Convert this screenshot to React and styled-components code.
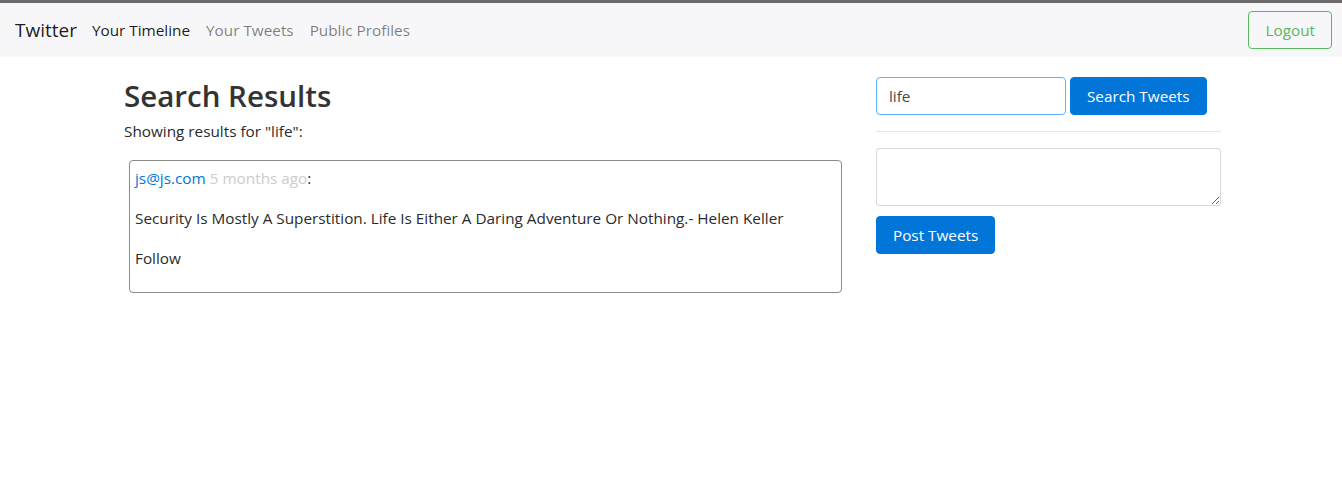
import React from "react";
import styled, { createGlobalStyle } from "styled-components";

const GlobalStyle = createGlobalStyle`
  * { box-sizing: border-box; }
  body {
    margin: 0;
    font-family: "Open Sans", "Noto Sans", sans-serif;
    font-size: 15.3px;
    line-height: 24px;
    color: #292b2c;
    background: #fff;
  }
`;

export default function App() {
  return (
    <>
      <GlobalStyle />
      <Navbar>
        <Brand>Twitter</Brand>
        <NavLink $active>Your Timeline</NavLink>
        <NavLink>Your Tweets</NavLink>
        <NavLink>Public Profiles</NavLink>
        <LogoutButton>Logout</LogoutButton>
      </Navbar>
      <Container>
        <MainColumn>
          <Title>Search Results</Title>
          <Subtitle>Showing results for "life":</Subtitle>
          <TweetCard>
            <TweetLine>
              <UserLink>js@js.com</UserLink> <TimeAgo>5 months ago</TimeAgo>:
            </TweetLine>
            <TweetLine>
              Security Is Mostly A Superstition. Life Is Either A Daring Adventure Or Nothing.- Helen Keller
            </TweetLine>
            <TweetLine>Follow</TweetLine>
          </TweetCard>
        </MainColumn>
        <SideColumn>
          <SearchRow>
            <SearchInput defaultValue="life" />
            <PrimaryButton>Search Tweets</PrimaryButton>
          </SearchRow>
          <Divider />
          <TweetBox />
          <PrimaryButton>Post Tweets</PrimaryButton>
        </SideColumn>
      </Container>
    </>
  );
}

const Navbar = styled.nav`
  display: flex;
  align-items: center;
  height: 57px;
  padding: 0 10px 0 15px;
  background: #f7f7f9;
  border-top: 3px solid #6b6b6b;
`;

const Brand = styled.span`
  font-size: 19px;
  color: rgba(0, 0, 0, 0.9);
  margin-right: 7px;
`;

const NavLink = styled.span`
  padding: 0 8px;
  color: ${(p) => (p.$active ? "rgba(0,0,0,0.9)" : "rgba(0,0,0,0.5)")};
`;

const LogoutButton = styled.button`
  margin-left: auto;
  height: 38px;
  padding: 0 16px;
  font: inherit;
  color: #5cb85c;
  background: transparent;
  border: 1px solid #5cb85c;
  border-radius: 4px;
`;

const Container = styled.div`
  display: flex;
  width: 1100px;
  margin: 0 auto;
  padding-top: 20px;
`;

const MainColumn = styled.div`
  width: 757px;
  padding-left: 3px;
`;

const Title = styled.h2`
  margin: 0;
  font-size: 29.5px;
  font-weight: 600;
  line-height: 38px;
  color: #333;
`;

const Subtitle = styled.p`
  margin: 4px 0 17px;
`;

const TweetCard = styled.div`
  margin-left: 5px;
  width: 713px;
  padding: 5px 5px 6px;
  border: 1px solid #8a8a8a;
  border-radius: 4px;
`;

const TweetLine = styled.p`
  margin: 0 0 16px;
`;

const UserLink = styled.a`
  color: #0275d8;
  text-decoration: none;
`;

const TimeAgo = styled.span`
  color: #cccccc;
`;

const SideColumn = styled.div`
  width: 346px;
  display: flex;
  flex-direction: column;
  align-items: flex-start;
`;

const SearchRow = styled.div`
  display: flex;
  gap: 4px;
`;

const SearchInput = styled.input`
  width: 190px;
  height: 38px;
  padding: 0 12px;
  font: inherit;
  color: #464a4c;
  border: 1px solid #5cb3fd;
  border-radius: 4px;
  outline: none;
`;

const PrimaryButton = styled.button`
  height: 38px;
  padding: 0 16px;
  font: inherit;
  color: #fff;
  background: #0275d8;
  border: 1px solid #0275d8;
  border-radius: 4px;
`;

const Divider = styled.hr`
  width: 100%;
  margin: 16px 0;
  border: 0;
  border-top: 1px solid rgba(0, 0, 0, 0.1);
`;

const TweetBox = styled.textarea`
  width: 100%;
  height: 58px;
  margin-bottom: 10px;
  border: 1px solid rgba(0, 0, 0, 0.15);
  border-radius: 4px;
`;
